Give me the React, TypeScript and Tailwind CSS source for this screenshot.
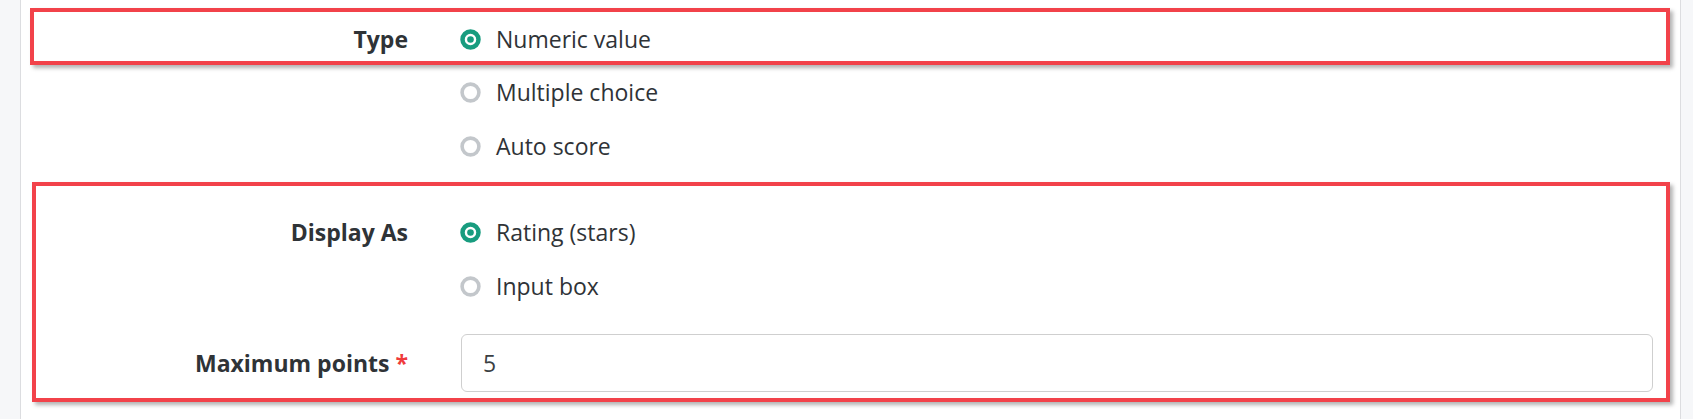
import React from 'react';

const font = { fontFamily: '"Open Sans", "Noto Sans", Arial, sans-serif' };

function Radio({ checked, label }: { checked?: boolean; label: string }) {
  return (
    <div className="flex items-center">
      <svg width="21" height="21" viewBox="0 0 21 21" className="shrink-0">
        {checked ? (
          <>
            <circle cx="10.5" cy="10.5" r="8" fill="white" stroke="#189c7f" strokeWidth="4.5" />
            <circle cx="10.5" cy="10.5" r="3.3" fill="#189c7f" />
          </>
        ) : (
          <circle cx="10.5" cy="10.5" r="8.4" fill="white" stroke="#c3c7cb" strokeWidth="3.6" />
        )}
      </svg>
      <span className="ml-[15px] text-[23px] leading-[33px] text-[#2f3337]">{label}</span>
    </div>
  );
}

export default function App() {
  return (
    <div className="flex h-[419px] w-full bg-[#f6f7f9]" style={font}>
      <div className="w-[21px] border-r border-[#dcdde0] bg-[#f6f7f9]" />

      {/* form panel */}
      <div className="flex flex-1 flex-col bg-white">
        {/* Type (highlighted) */}
        <div className="mt-[8px] ml-[9px] mr-[10px] h-[57px] border-[4px] border-[#f2424a] shadow-[3px_3px_4px_rgba(0,0,0,0.3)]">
          <div className="flex h-[49px] items-center pt-[6px]">
            <div className="w-[374px] text-right text-[23px] font-bold leading-[33px] text-[#2f3337]">Type</div>
            <div className="ml-[52px]">
              <Radio checked label="Numeric value" />
            </div>
          </div>
        </div>

        <div className="flex h-[54px] items-center pl-[439px]">
          <Radio label="Multiple choice" />
        </div>
        <div className="flex h-[55px] items-center pl-[439px]">
          <Radio label="Auto score" />
        </div>

        {/* Display As + Maximum points (highlighted) */}
        <div className="mt-[8px] ml-[11px] mr-[10px] h-[220px] border-[4px] border-[#f2424a] pt-[19px] pr-[13px] pb-[6px] shadow-[3px_3px_4px_rgba(0,0,0,0.3)]">
          <div className="flex">
            <div className="flex h-[54px] w-[372px] items-center justify-end text-[23px] font-bold leading-[33px] text-[#2f3337]">
              Display As
            </div>
            <div className="ml-[52px] flex flex-col">
              <div className="flex h-[54px] items-center">
                <Radio checked label="Rating (stars)" />
              </div>
              <div className="flex h-[54px] items-center">
                <Radio label="Input box" />
              </div>
            </div>
          </div>

          <div className="mt-[21px] flex items-center">
            <div className="w-[372px] text-right text-[23px] font-bold leading-[33px] text-[#2f3337]">
              Maximum points <span className="text-[#ef3b3b]">*</span>
            </div>
            <input
              readOnly
              value="5"
              className="ml-[53px] h-[58px] flex-1 rounded-[6px] border border-[#cfcfcf] bg-white px-[21px] text-[23px] text-[#3b3f43] outline-none"
              style={font}
            />
          </div>
        </div>
      </div>

      <div className="w-[13px] border-l border-[#dcdde0] bg-[#f6f7f9]" />
    </div>
  );
}
